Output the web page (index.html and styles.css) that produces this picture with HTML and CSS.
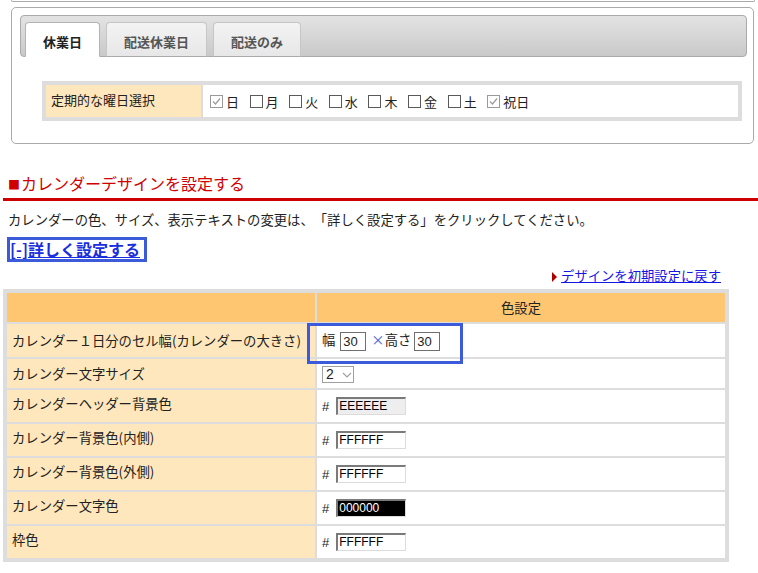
FILE: index.html
```html
<!DOCTYPE html>
<html lang="ja">
<head>
<meta charset="utf-8">
<title>カレンダー設定</title>
<link rel="stylesheet" href="styles.css">
</head>
<body>
<div class="page">
  <div class="prev-box"></div>

  <div class="holiday-box">
    <div class="tabbar">
      <div class="tab active">休業日</div>
      <div class="tab">配送休業日</div>
      <div class="tab">配送のみ</div>
    </div>
    <div class="week">
      <div class="week-label">定期的な曜日選択</div>
      <div class="week-days">
        <span class="day"><span class="cb checked"><svg viewBox="0 0 11 11" width="11" height="11"><path d="M2 5.5 L4.5 8 L9 2.5" fill="none" stroke="#9a9a9a" stroke-width="1.2"/></svg></span>日</span>
        <span class="day"><span class="cb"></span>月</span>
        <span class="day"><span class="cb"></span>火</span>
        <span class="day"><span class="cb"></span>水</span>
        <span class="day"><span class="cb"></span>木</span>
        <span class="day"><span class="cb"></span>金</span>
        <span class="day"><span class="cb"></span>土</span>
        <span class="day"><span class="cb checked"><svg viewBox="0 0 11 11" width="11" height="11"><path d="M2 5.5 L4.5 8 L9 2.5" fill="none" stroke="#9a9a9a" stroke-width="1.2"/></svg></span>祝日</span>
      </div>
    </div>
  </div>

  <h2 class="section-title"><span class="sq">■</span>カレンダーデザインを設定する</h2>
  <p class="note">カレンダーの色、サイズ、表示テキストの変更は、「詳しく設定する」をクリックしてください。</p>
  <a class="detail-toggle" href="#">[-]詳しく設定する</a>

  <div class="reset-row"><span class="tri"></span><a href="#">デザインを初期設定に戻す</a></div>

  <table class="design">
    <tr class="r-head">
      <th class="lab-h"></th>
      <th class="val-h">色設定</th>
    </tr>
    <tr class="r-size">
      <td class="lab">カレンダー１日分のセル幅(カレンダーの大きさ)</td>
      <td class="val hl">
        <span class="w-lab">幅</span><span class="num">30</span><span class="times">×</span><span class="h-lab">高さ</span><span class="num">30</span>
      </td>
    </tr>
    <tr class="r-font">
      <td class="lab">カレンダー文字サイズ</td>
      <td class="val"><span class="select">2<svg viewBox="0 0 10 6" width="10" height="6"><path d="M1 1 L5 5 L9 1" fill="none" stroke="#a0a0a0" stroke-width="1.2"/></svg></span></td>
    </tr>
    <tr class="r-color">
      <td class="lab">カレンダーヘッダー背景色</td>
      <td class="val"><span class="hash">#</span><span class="hex gray">EEEEEE</span></td>
    </tr>
    <tr class="r-color">
      <td class="lab">カレンダー背景色(内側)</td>
      <td class="val"><span class="hash">#</span><span class="hex">FFFFFF</span></td>
    </tr>
    <tr class="r-color">
      <td class="lab">カレンダー背景色(外側)</td>
      <td class="val"><span class="hash">#</span><span class="hex">FFFFFF</span></td>
    </tr>
    <tr class="r-color">
      <td class="lab">カレンダー文字色</td>
      <td class="val"><span class="hash">#</span><span class="hex black">000000</span></td>
    </tr>
    <tr class="r-color">
      <td class="lab">枠色</td>
      <td class="val"><span class="hash">#</span><span class="hex">FFFFFF</span></td>
    </tr>
  </table>
</div>
</body>
</html>
```

FILE: styles.css
```css
* { box-sizing: border-box; }

body {
  margin: 0;
  font-family: "Noto Sans CJK JP", "Noto Sans", sans-serif;
  font-size: 13.33px;
  color: #222;
  background: #fff;
  text-spacing-trim: space-all;
}

.page {
  width: 758px;
  padding-left: 3px;
}

.prev-box {
  height: 2px;
  margin: 0 3px 0 8px;
  border: 1px solid #aaa;
  border-top: 0;
  border-radius: 0 0 5px 5px;
}

.holiday-box {
  margin: 5px 4px 0 8px;
  border: 1px solid #aaa;
  border-radius: 5px;
  padding: 7px 6px 22px 8px;
}

.tabbar {
  height: 42px;
  border: 1px solid #aaa;
  border-radius: 4px;
  background: linear-gradient(#e3e3e3, #c9c9c9);
  padding: 6px 4px 0;
  display: flex;
  align-items: flex-end;
  gap: 6px;
}

.tab {
  height: 35px;
  margin-bottom: -1px;
  padding: 4px 17px 0;
  line-height: 30px;
  border: 1px solid #c6c6c6;
  border-bottom: 1px solid #aaa;
  border-radius: 4px 4px 0 0;
  background: linear-gradient(#f3f3f3, #e7e7e7);
  font-size: 13px;
  font-weight: bold;
  color: #555;
}

.tab.active {
  background: #fff;
  border-color: #b4b4b4;
  border-bottom-color: #fff;
  color: #222;
}

.week {
  margin: 24px 0 0 22px;
  width: 700px;
  background: #ddd;
  padding: 4px;
  display: grid;
  grid-template-columns: 155px 1fr;
  column-gap: 2px;
}

.week-label {
  height: 32px;
  line-height: 30px;
  padding-left: 5px;
  font-size: 13px;
  background: #ffe7bd;
}

.week-days {
  background: #fff;
  display: flex;
  align-items: center;
  padding-left: 7px;
  gap: 10.6px;
  font-size: 13px;
}

.day {
  display: inline-flex;
  align-items: center;
  line-height: 16px;
  padding-top: 1px;
}

.cb {
  width: 13px;
  height: 13px;
  margin-right: 3px;
  border: 1px solid #5a5a5a;
  background: #fff;
  display: inline-flex;
  align-items: center;
  justify-content: center;
}

.cb.checked {
  border-color: #9a9a9a;
}

.section-title {
  margin: 28px 0 0;
  padding: 0 0 2px 5px;
  font-size: 16px;
  font-weight: normal;
  line-height: 22px;
  color: #d00000;
  border-bottom: 3px solid #cc0000;
}

.sq {
  font-size: 12px;
  margin-right: 1px;
}

.note {
  margin: 9px 0 0;
  padding-left: 5px;
  line-height: 20px;
}

.detail-toggle {
  display: inline-block;
  margin: 7px 0 0 4px;
  padding: 0 4px 0 0;
  height: 25px;
  line-height: 19px;
  border: 3px solid #3b5bdb;
  font-size: 16px;
  font-weight: bold;
  color: #1a2ee0;
  text-decoration: underline;
}

.reset-row {
  width: 726px;
  margin-top: 5px;
  padding-right: 8px;
  text-align: right;
  line-height: 18px;
}

.reset-row a {
  color: #1515e6;
  text-decoration: underline;
}

.tri {
  display: inline-block;
  width: 0;
  height: 0;
  margin-right: 4px;
  border-top: 5px solid transparent;
  border-bottom: 5px solid transparent;
  border-left: 5px solid #b00000;
  vertical-align: -1px;
}

.design {
  margin-top: 4px;
  width: 726px;
  border: 2px solid #ddd;
  border-spacing: 2px;
  border-collapse: separate;
  background: #ddd;
}

.design th {
  height: 29px;
  padding: 0;
  background: #ffc671;
  font-weight: normal;
}

.lab-h { width: 308px; }

.design td {
  padding: 0 5px;
}

.lab {
  background: #ffe7bd;
  width: 308px;
  vertical-align: middle;
}

.val {
  background: #fff;
  vertical-align: middle;
  padding-left: 6px;
}

.r-size td { height: 33px; }
.r-font td { height: 29px; }
.r-color td { height: 32px; }
.r-color .lab { padding-bottom: 6px; }
.r-color .val { padding-bottom: 2px; }

.hl { position: relative; padding-left: 5px; }

.hl::after {
  content: "";
  position: absolute;
  left: -10px;
  top: -1px;
  width: 150px;
  height: 35px;
  border: 3px solid #3b5bdb;
}

.w-lab { margin-right: 5px; }

.num {
  display: inline-block;
  width: 26px;
  height: 19px;
  border: 1px solid #6f6f6f;
  font-family: "Liberation Sans", Arial, sans-serif;
  font-size: 13px;
  line-height: 17px;
  padding-left: 2px;
  vertical-align: middle;
}

.times {
  color: #3b5bdb;
  margin-left: 5px;
}

.h-lab { margin-right: 3px; }

.select {
  display: inline-flex;
  align-items: center;
  gap: 8px;
  width: 32px;
  height: 17px;
  border: 1px solid #a0a0a0;
  padding-left: 3px;
  font-family: "Liberation Sans", Arial, sans-serif;
  font-size: 14px;
  line-height: 15px;
  vertical-align: middle;
}

.hash {
  display: inline-block;
  font-family: "Liberation Sans", Arial, sans-serif;
  font-size: 13px;
  margin-right: 7px;
  vertical-align: middle;
}

.hex {
  display: inline-block;
  width: 70px;
  height: 18px;
  border-style: solid;
  border-width: 2px 1px 1px 2px;
  border-color: #7a7a7a #dcdcdc #dcdcdc #7a7a7a;
  background: #fff;
  font-family: "Liberation Sans", Arial, sans-serif;
  font-size: 12px;
  line-height: 15px;
  padding-left: 1px;
  vertical-align: middle;
  color: #000;
}

.hex.gray { background: #eee; }
.hex.black { background: #000; color: #fff; }
```
